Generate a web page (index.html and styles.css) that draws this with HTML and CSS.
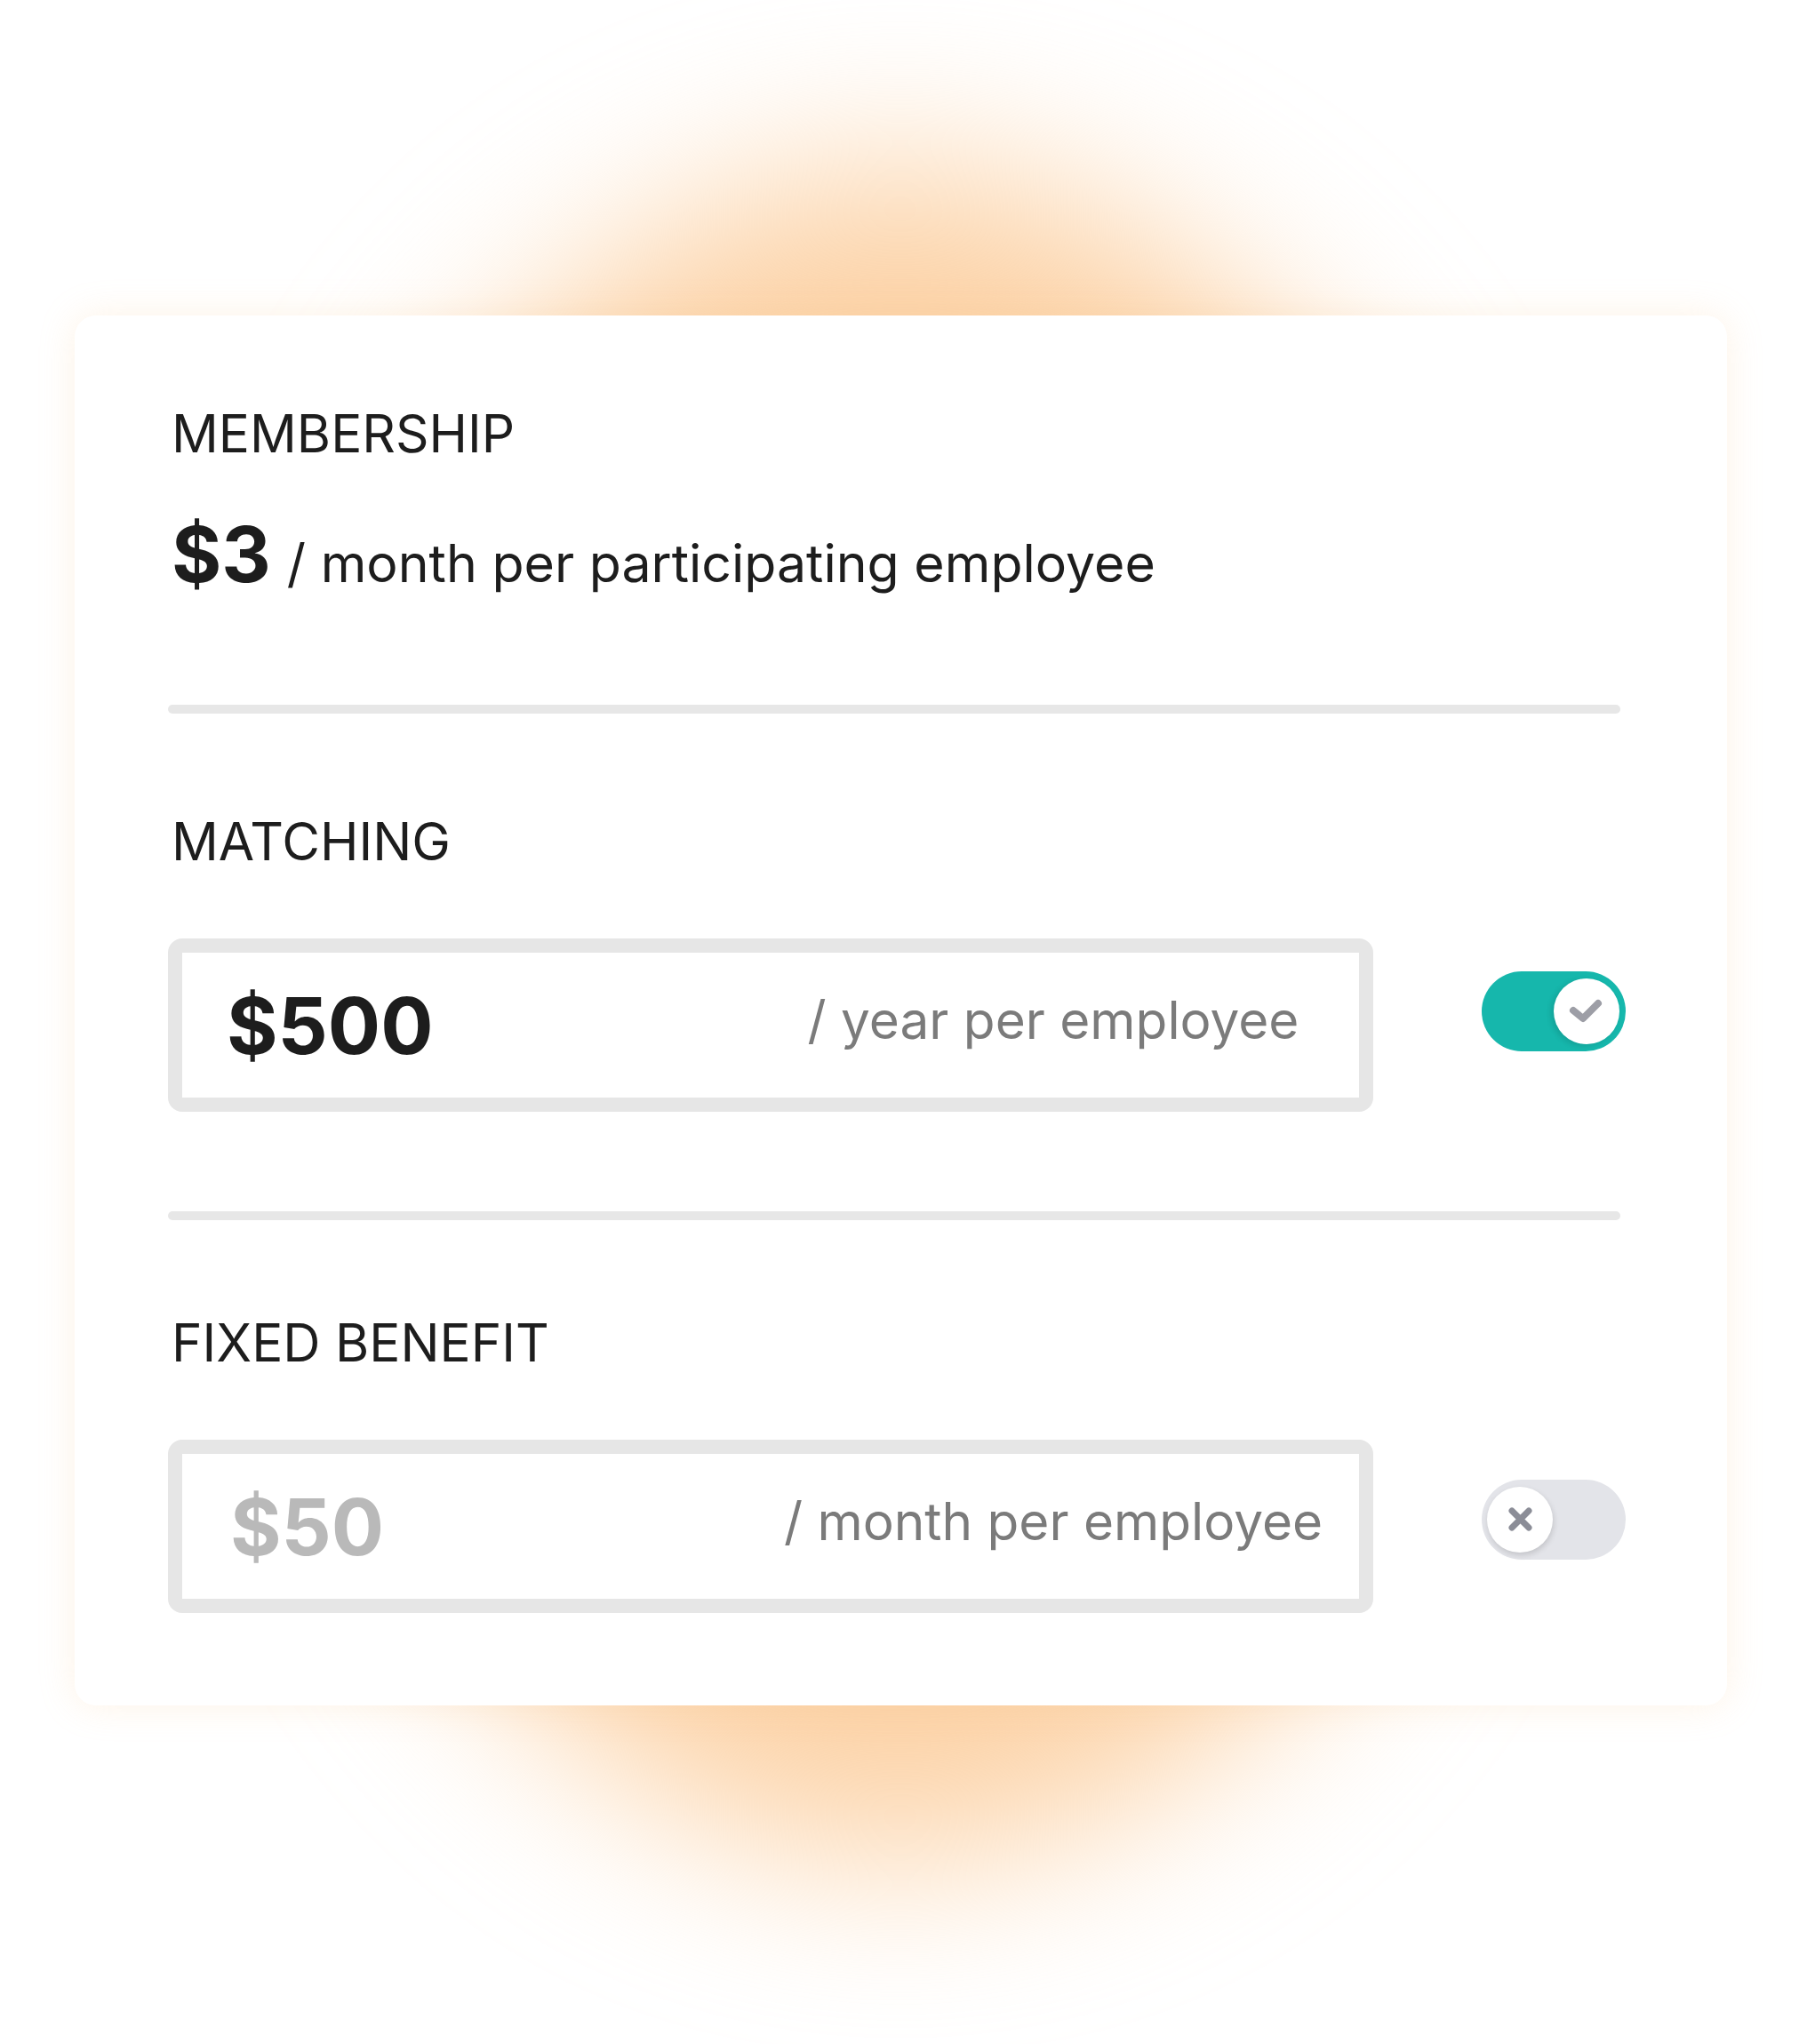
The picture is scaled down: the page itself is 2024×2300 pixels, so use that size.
FILE: index.html
```html
<!DOCTYPE html>
<html>
    <head>
        <meta charset="utf-8">
        <title>Benefits</title>
        <link rel="stylesheet" href="styles.css">
    </head>
    <body>
        <div class="page">
            <div class="glow"></div>
            <section class="card">
                <h2 class="label">MEMBERSHIP</h2>
                <p class="price">
                    <span class="price-amount">$3</span>
                    <span class="price-unit">/ month per participating employee</span>
                </p>

                <hr class="rule">

                <h2 class="label">MATCHING</h2>
                <div class="option">
                    <div class="field">
                        <span class="field-amount">$500</span>
                        <span class="field-unit">/ year per employee</span>
                    </div>
                    <span class="toggle is-on">
                        <span class="knob">
                            <svg viewBox="0 0 74 74" width="74" height="74">
                                <path d="M22 36 L33 45 L50 28" fill="none" stroke="#9d9ea6" stroke-width="8" stroke-linecap="round" stroke-linejoin="round"/>
                            </svg>
                        </span>
                    </span>
                </div>

                <hr class="rule">

                <h2 class="label is-tight">FIXED BENEFIT</h2>
                <div class="option">
                    <div class="field is-disabled">
                        <span class="field-amount">$50</span>
                        <span class="field-unit">/ month per employee</span>
                    </div>
                    <span class="toggle is-off">
                        <span class="knob">
                            <svg viewBox="0 0 74 74" width="74" height="74">
                                <path d="M28 27 L47 46 M47 27 L28 46" fill="none" stroke="#8b8d97" stroke-width="7" stroke-linecap="round"/>
                            </svg>
                        </span>
                    </span>
                </div>
            </section>
        </div>
    </body>
</html>
```

FILE: styles.css
```css
body {
    margin: 0;
    background: #ffffff;
    font-family: Inter, "Noto Sans", sans-serif;
    color: #1d1d1d;
}

.page {
    position: relative;
    width: 2024px;
    height: 2300px;
    padding: 355px 0 0 84px;
    box-sizing: border-box;
    overflow: hidden;
}

/* soft orange light behind the card */
.glow {
    position: absolute;
    left: 313px;
    top: 190px;
    width: 1400px;
    height: 1900px;
    border-radius: 50%;
    background: #fcd2a6;
    filter: blur(95px);
}

.card {
    position: relative;
    width: 1859px;
    box-sizing: border-box;
    padding: 97px 120px 104px 105px;
    background: #ffffff;
    border-radius: 24px;
    box-shadow: 0 0 40px rgba(250, 200, 140, 0.22);
}

.label {
    margin: 0;
    padding-left: 4px;
    font-size: 58.5px;
    font-weight: 400;
    line-height: 72px;
}

.price {
    display: flex;
    align-items: baseline;
    margin: 57px 0 0;
    padding-left: 4px;
}

.price-amount {
    font-size: 86px;
    font-weight: 700;
    line-height: 1;
    margin-right: 18px;
}

.price-unit {
    font-size: 59px;
    line-height: 1;
}

.rule {
    height: 10px;
    margin: 126px 0 0;
    border: 0;
    border-radius: 5px;
    background: #e7e7e7;
}

.rule + .label {
    margin-top: 108px;
}

.rule + .label.is-tight {
    margin-top: 102px;
}

.option {
    display: flex;
    align-items: flex-start;
    margin-top: 73px;
}

.option + .rule {
    margin-top: 112px;
}

.field {
    flex: 0 0 1356px;
    height: 195px;
    box-sizing: border-box;
    display: flex;
    align-items: center;
    padding-left: 50px;
    border: 16px solid #e6e6e6;
    border-radius: 16px;
}

.field-amount {
    font-size: 88px;
    font-weight: 700;
    line-height: 1;
}

.field.is-disabled .field-amount {
    padding-left: 4px;
    color: #b9b9b9;
}

.field-unit {
    width: 688px;
    margin-left: auto;
    margin-bottom: 10px;
    text-align: center;
    font-size: 58.5px;
    line-height: 1;
    color: #7b7b7b;
}

.toggle {
    display: flex;
    align-items: center;
    width: 162px;
    height: 90px;
    box-sizing: border-box;
    margin-left: auto;
    margin-right: -6px;
    border-radius: 45px;
}

.toggle.is-on {
    margin-top: 37px;
    padding: 0 7px 0 0;
    justify-content: flex-end;
    background: #16b7ac;
}

.toggle.is-off {
    margin-top: 45px;
    padding: 0 0 0 6px;
    background: #e3e4e9;
}

.knob {
    display: block;
    width: 74px;
    height: 74px;
    border-radius: 50%;
    background: #ffffff;
}

.knob svg {
    display: block;
}

.toggle.is-on .knob {
    box-shadow: -3px 2px 6px rgba(0, 0, 0, 0.12);
}

.toggle.is-off .knob {
    box-shadow: 1px 3px 6px rgba(0, 0, 0, 0.14);
}
```
